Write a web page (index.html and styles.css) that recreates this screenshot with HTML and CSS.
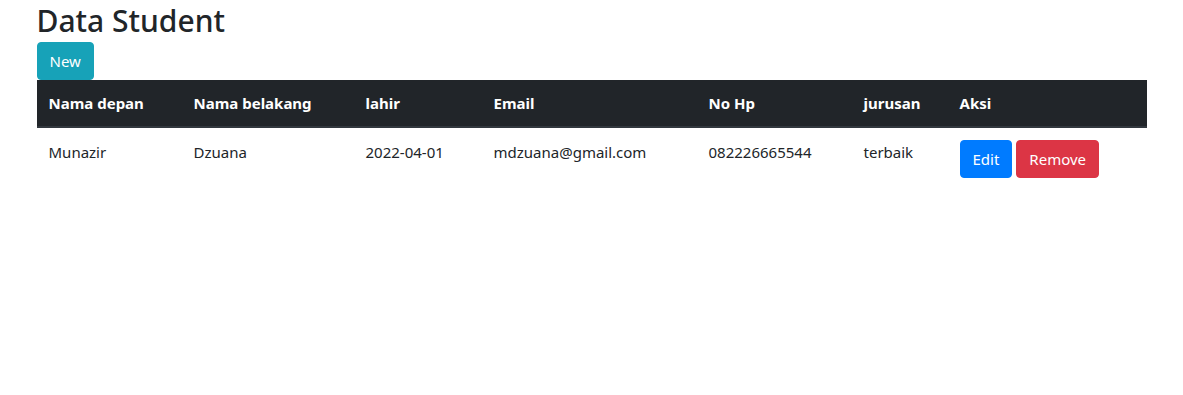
FILE: index.html
```html
<!DOCTYPE html>
<html lang="id">
<head>
<meta charset="utf-8">
<title>Data Student</title>
<link rel="stylesheet" href="styles.css">
</head>
<body>
<div class="container">
  <h2 class="title">Data Student</h2>
  <button class="btn btn-info">New</button>
  <table class="table">
    <colgroup>
      <col class="c1"><col class="c2"><col class="c3"><col class="c4"><col class="c5"><col class="c6"><col class="c7">
    </colgroup>
    <thead>
      <tr>
        <th>Nama depan</th>
        <th>Nama belakang</th>
        <th>lahir</th>
        <th>Email</th>
        <th>No Hp</th>
        <th>jurusan</th>
        <th>Aksi</th>
      </tr>
    </thead>
    <tbody>
      <tr>
        <td>Munazir</td>
        <td>Dzuana</td>
        <td>2022-04-01</td>
        <td>mdzuana@gmail.com</td>
        <td>082226665544</td>
        <td>terbaik</td>
        <td class="actions"><button class="btn btn-primary">Edit</button><button class="btn btn-danger">Remove</button></td>
      </tr>
    </tbody>
  </table>
</div>
</body>
</html>
```

FILE: styles.css
```css
* { box-sizing: border-box; }
body {
  margin: 0;
  font-family: "Noto Sans", "Open Sans", "Liberation Sans", sans-serif;
  font-size: 16px;
  line-height: 1.5;
  color: #212529;
  background: #fff;
}
.container {
  width: 1110px;
  margin: 0 auto;
}
.title {
  margin: 0;
  height: 42px;
  font-size: 30px;
  font-weight: 500;
  line-height: 41px;
}
.btn {
  display: inline-block;
  font-family: inherit;
  font-size: 15px;
  line-height: 24px;
  padding: 6px 12px;
  border: 1px solid transparent;
  border-radius: 4px;
  color: #fff;
  cursor: pointer;
  vertical-align: top;
}
.btn-info { background: #17a2b8; border-color: #17a2b8; }
.btn-primary { background: #007bff; border-color: #007bff; }
.btn-danger { background: #dc3545; border-color: #dc3545; }
.table {
  width: 100%;
  border-collapse: collapse;
  table-layout: fixed;
}
.c1 { width: 145px; }
.c2 { width: 172px; }
.c3 { width: 128px; }
.c4 { width: 215px; }
.c5 { width: 155px; }
.c6 { width: 96px; }
.table th {
  background: #212529;
  color: #fff;
  font-weight: 700;
  font-size: 15px;
  text-align: left;
  padding: 11px 12px;
  line-height: 24px;
  border-bottom: 2px solid #32383e;
}
.table td {
  padding: 12px 12px;
  font-size: 15px;
  line-height: 24px;
  vertical-align: top;
}
.actions { display: flex; gap: 4px; }
```
